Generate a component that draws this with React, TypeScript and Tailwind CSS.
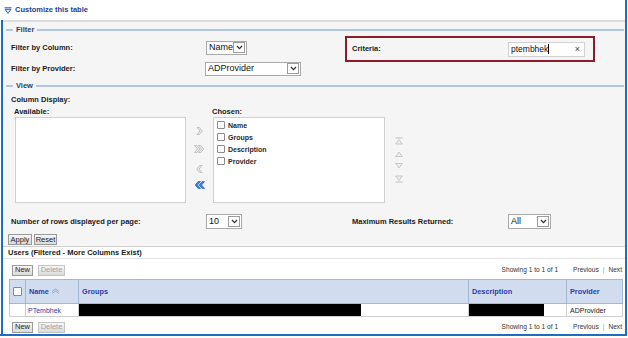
import React from 'react'

function Chevron() {
  return (
    <svg width="7" height="5" viewBox="0 0 7 5">
      <path d="M1 1 L3.5 3.6 L6 1" fill="none" stroke="#333" strokeWidth="1.3" />
    </svg>
  )
}

function Select({ className, text }: { className: string; text: string }) {
  return (
    <div className={`flex items-center bg-white border border-[#a9a9a9] ${className}`}>
      <span className="flex-1 pl-[2px] text-[9px] leading-none text-[#111]">{text}</span>
      <span className="flex items-center justify-center w-[12px] h-[11px] mr-[1px] border border-[#9c9c9c] bg-white">
        <Chevron />
      </span>
    </div>
  )
}

function Legend({ label }: { label: string }) {
  return (
    <div className="flex items-center h-full">
      <div className="ml-[3px] w-[7px] h-[2px] bg-[#b3c6dc]" />
      <span className="mx-[3px] text-[7.5px] font-bold leading-none text-[#2b3f66]">{label}</span>
      <div className="flex-1 h-[2px] bg-[#b3c6dc] mr-[1px]" />
    </div>
  )
}

function Button({ label, width, disabled }: { label: string; width: string; disabled?: boolean }) {
  return (
    <div
      className={`flex items-center justify-center h-[11px] text-[7.5px] leading-none border bg-gradient-to-b from-[#f7f7f7] to-[#dadada] ${width} ${
        disabled ? 'border-[#c4c4c4] text-[#a3a3a3]' : 'border-[#9a9a9a] text-[#222]'
      }`}
    >
      {label}
    </div>
  )
}

function Check({ size }: { size: string }) {
  return <div className={`${size} bg-white border border-[#8a8a8a] rounded-[1px]`} />
}

function MoveIcon({ dir, double, active }: { dir: 'left' | 'right'; double?: boolean; active?: boolean }) {
  const fill = active ? '#3d7fd9' : '#ececec'
  const stroke = active ? '#1d5fbf' : '#aeaeae'
  const one = '0.5,0.5 2.8,0.5 5.8,4 2.8,7.5 0.5,7.5 3.5,4'
  return (
    <svg width="11" height="8" viewBox="0 0 11 8">
      <g transform={dir === 'left' ? 'translate(11 0) scale(-1 1)' : undefined}>
        {double ? (
          <>
            <polygon points={one} fill={fill} stroke={stroke} strokeWidth="0.7" />
            <polygon points={one} transform="translate(4 0)" fill={fill} stroke={stroke} strokeWidth="0.7" />
          </>
        ) : (
          <polygon points={one} transform="translate(2.5 0)" fill={fill} stroke={stroke} strokeWidth="0.7" />
        )}
      </g>
    </svg>
  )
}

function OrderIcon({ kind }: { kind: 'top' | 'up' | 'down' | 'bottom' }) {
  const c = '#bdbdbd'
  return (
    <svg width="8" height="8" viewBox="0 0 8 8">
      {kind === 'top' && (
        <>
          <path d="M0.5 1 H7.5" stroke={c} strokeWidth="1" />
          <polygon points="4,2.5 7.3,7 0.7,7" fill="#f0f0f0" stroke={c} strokeWidth="0.8" />
        </>
      )}
      {kind === 'up' && <polygon points="4,2 7.3,6.5 0.7,6.5" fill="#f0f0f0" stroke={c} strokeWidth="0.8" />}
      {kind === 'down' && <polygon points="0.7,1.5 7.3,1.5 4,6" fill="#f0f0f0" stroke={c} strokeWidth="0.8" />}
      {kind === 'bottom' && (
        <>
          <polygon points="0.7,1 7.3,1 4,5.5" fill="#f0f0f0" stroke={c} strokeWidth="0.8" />
          <path d="M0.5 7 H7.5" stroke={c} strokeWidth="1" />
        </>
      )}
    </svg>
  )
}

function Toolbar() {
  return (
    <div className="flex items-center justify-between h-[12px] pl-[9px] pr-[3px]">
      <div className="flex items-center gap-[5px]">
        <Button label="New" width="w-[21px]" />
        <Button label="Delete" width="w-[27px]" disabled />
      </div>
      <div className="flex items-center text-[6.6px] leading-none text-[#333]">
        <span>Showing 1 to 1 of 1</span>
        <span className="ml-[15px]">Previous</span>
        <span className="mx-[4px] text-[#999]">|</span>
        <span>Next</span>
      </div>
    </div>
  )
}

export default function App() {
  const chosen = ['Name', 'Groups', 'Description', 'Provider']

  return (
    <div className="w-[628px] h-[338px] bg-white overflow-hidden font-['Liberation_Sans',Arial,sans-serif] text-[#1a1a1a]">
      <div className="w-[627px] h-[336px] border-r-2 border-b-2 border-[#1b6fc2] flex flex-col">
        {/* Header */}
        <div className="h-[20px] flex items-center pl-[4px] gap-[3px]">
          <svg width="8" height="7" viewBox="0 0 8 7">
            <path d="M0.5 0.8 H7.5" stroke="#2a56b0" strokeWidth="1" />
            <polygon points="1,2.3 7,2.3 4,6.5" fill="#dbe6f7" stroke="#2a56b0" strokeWidth="0.9" />
          </svg>
          <span className="text-[7.5px] font-bold leading-none text-[#1f3d8c]">Customize this table</span>
        </div>

        <div className="flex-1 ml-[1px] border-l-2 border-[#1b6fc2] flex flex-col">
          {/* Filter + View */}
          <section className="h-[226px] border-t-2 border-[#dcdcdc] bg-[#f5f5f5] flex flex-col">
            <div className="h-[15px]">
              <Legend label="Filter" />
            </div>

            <div className="flex items-start">
              <div className="w-[342px] flex flex-col">
                <div className="h-[21px] flex items-center pl-[8px]">
                  <span className="w-[195px] text-[7.5px] font-bold leading-none">Filter by Column:</span>
                  <Select className="w-[41px] h-[14px]" text="Name" />
                </div>
                <div className="h-[21px] flex items-center pl-[8px]">
                  <span className="w-[194px] text-[7.5px] font-bold leading-none">Filter by Provider:</span>
                  <Select className="w-[96px] h-[14px]" text="ADProvider" />
                </div>
              </div>
              <div className="mt-[-1px] w-[250px] h-[26px] border-2 border-[#8a1c2b] flex items-center pl-[5px]">
                <span className="w-[156px] text-[7.5px] font-bold leading-none">Criteria:</span>
                <div className="w-[77px] h-[15px] bg-white border border-[#d2d2d2] flex items-center justify-between pl-[2px] pr-[4px]">
                  <div className="flex items-center">
                    <span className="text-[8.5px] leading-none text-[#111]">ptembhek</span>
                    <div className="w-[1px] h-[10px] bg-black" />
                  </div>
                  <span className="text-[9px] leading-none text-[#444]">×</span>
                </div>
              </div>
            </div>

            <div className="h-[14px]">
              <Legend label="View" />
            </div>

            <div className="h-[13px] flex items-center pl-[8px]">
              <span className="text-[7.5px] font-bold leading-none">Column Display:</span>
            </div>
            <div className="h-[11px] flex items-center pl-[11px]">
              <span className="w-[198px] text-[7.5px] font-bold leading-none">Available:</span>
              <span className="text-[7.5px] font-bold leading-none">Chosen:</span>
            </div>

            <div className="h-[86px] flex items-start ml-[12px]">
              <div className="w-[171px] h-[86px] bg-white border border-[#cfcfcf]" />
              <div className="w-[27px] h-[86px] flex flex-col items-center">
                <div className="mt-[10px]">
                  <MoveIcon dir="right" />
                </div>
                <div className="mt-[10px]">
                  <MoveIcon dir="right" double />
                </div>
                <div className="mt-[12px]">
                  <MoveIcon dir="left" />
                </div>
                <div className="mt-[8px]">
                  <MoveIcon dir="left" double active />
                </div>
              </div>
              <div className="w-[172px] h-[86px] bg-white border border-[#cfcfcf] pt-[1px] pl-[3px] flex flex-col">
                {chosen.map((c) => (
                  <div key={c} className="h-[12px] flex items-center gap-[3px]">
                    <Check size="w-[8px] h-[8px]" />
                    <span className="text-[7px] font-bold leading-none text-[#2a2a2a]">{c}</span>
                  </div>
                ))}
              </div>
              <div className="ml-[10px] mt-[20px] flex flex-col gap-[4.5px]">
                <OrderIcon kind="top" />
                <OrderIcon kind="up" />
                <OrderIcon kind="down" />
                <OrderIcon kind="bottom" />
              </div>
            </div>

            <div className="mt-[10px] h-[17px] flex items-center pl-[8px]">
              <span className="w-[195px] text-[7.5px] font-bold leading-none">Number of rows displayed per page:</span>
              <Select className="w-[36px] h-[15px]" text="10" />
              <span className="ml-[110px] w-[156px] text-[7.5px] font-bold leading-none">Maximum Results Returned:</span>
              <Select className="w-[43px] h-[15px]" text="All" />
            </div>

            <div className="mt-[4px] h-[12px] flex items-start pl-[5px] gap-[2px]">
              <Button label="Apply" width="w-[24px]" />
              <Button label="Reset" width="w-[23px]" />
            </div>
          </section>

          {/* Users title */}
          <div className="h-[13px] border-t border-b border-t-[#cfcfcf] border-b-[#e3e3e3] bg-white flex items-center pl-[5px]">
            <span className="text-[7.5px] font-bold leading-none">Users (Filtered - More Columns Exist)</span>
          </div>

          {/* Table */}
          <div className="flex-1 bg-white pt-[5px]">
            <Toolbar />
            <table className="mt-[3px] ml-[6px] w-[613px] table-fixed border-collapse">
              <colgroup>
                <col className="w-[16px]" />
                <col className="w-[53px]" />
                <col className="w-[390px]" />
                <col className="w-[98px]" />
                <col className="w-[56px]" />
              </colgroup>
              <thead>
                <tr className="h-[24px] bg-[#d1ddef]">
                  <th className="border border-[#a3b7d3] p-0">
                    <div className="flex justify-center">
                      <Check size="w-[9px] h-[9px]" />
                    </div>
                  </th>
                  <th className="border border-[#a3b7d3] px-[3px] text-left">
                    <div className="flex items-center gap-[2px]">
                      <span className="text-[7.3px] font-bold leading-none text-[#1f3fae]">Name</span>
                      <svg width="9" height="6" viewBox="0 0 9 6">
                        <path d="M1 3.5 L4.5 1 L8 3.5" fill="none" stroke="#8ea3c4" strokeWidth="0.9" />
                        <path d="M1 5.5 L4.5 3 L8 5.5" fill="none" stroke="#8ea3c4" strokeWidth="0.9" />
                      </svg>
                    </div>
                  </th>
                  <th className="border border-[#a3b7d3] px-[3px] text-left text-[7.3px] font-bold leading-none text-[#1f3fae]">
                    Groups
                  </th>
                  <th className="border border-[#a3b7d3] px-[3px] text-left text-[7.3px] font-bold leading-none text-[#1f3fae]">
                    Description
                  </th>
                  <th className="border border-[#a3b7d3] px-[3px] text-left text-[7.3px] font-bold leading-none text-[#1f3fae]">
                    Provider
                  </th>
                </tr>
              </thead>
              <tbody>
                <tr className="h-[13px]">
                  <td className="border border-[#cfcfcf] p-0" />
                  <td className="border border-[#cfcfcf] px-[2px] text-[7px] leading-none text-[#1f3fae]">PTembhek</td>
                  <td className="border border-[#cfcfcf] p-0">
                    <div className="w-[282px] h-[12px] bg-black" />
                  </td>
                  <td className="border border-[#cfcfcf] p-0">
                    <div className="w-[75px] h-[12px] bg-black" />
                  </td>
                  <td className="border border-[#cfcfcf] px-[3px] text-[7px] leading-none text-[#222]">ADProvider</td>
                </tr>
              </tbody>
            </table>
            <div className="mt-[4px]">
              <Toolbar />
            </div>
          </div>
        </div>
      </div>
    </div>
  )
}
